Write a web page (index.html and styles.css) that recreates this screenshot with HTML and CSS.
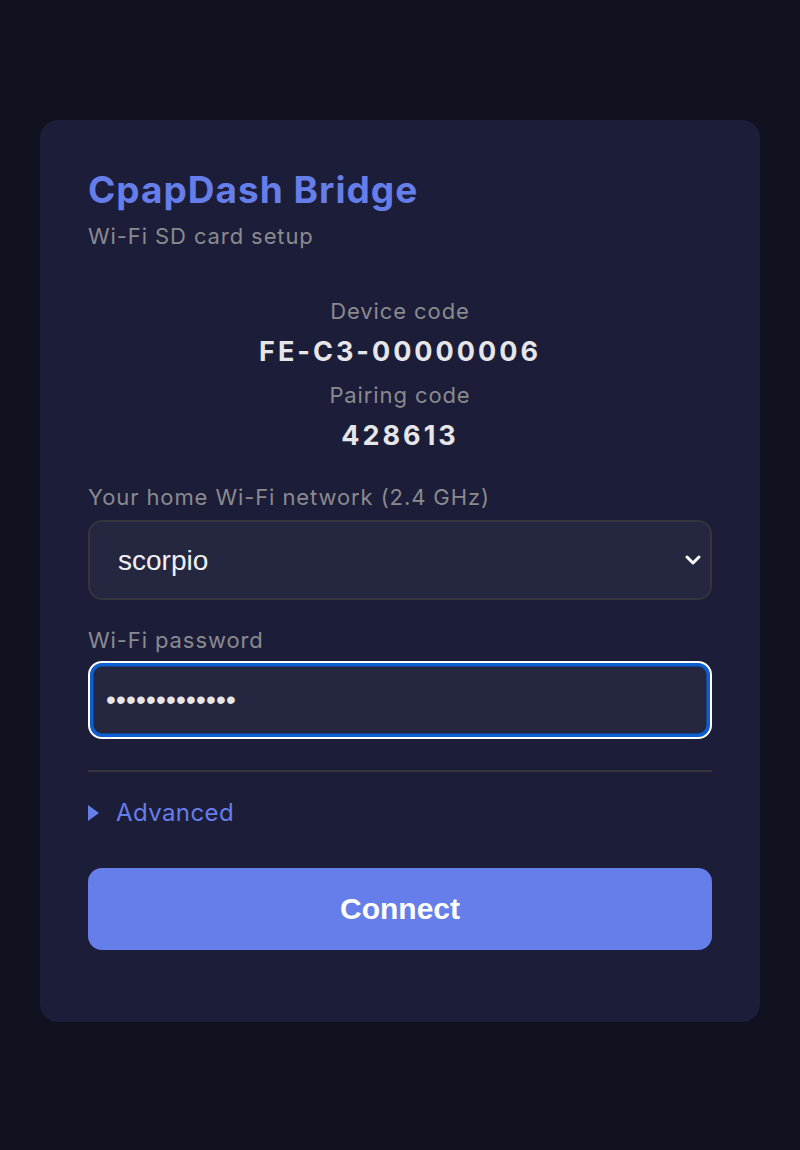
FILE: index.html
```html
<!DOCTYPE html>
<html lang="en">
<head>
<meta charset="utf-8">
<title>CpapDash Bridge</title>
<link rel="stylesheet" href="styles.css">
</head>
<body>
<main class="card">
  <h1 class="title">CpapDash Bridge</h1>
  <p class="subtitle">Wi-Fi SD card setup</p>

  <section class="codes">
    <div class="code-label">Device code</div>
    <div class="code-value">FE-C3-00000006</div>
    <div class="code-label code-label-2">Pairing code</div>
    <div class="code-value">428613</div>
  </section>

  <label class="field-label first" for="ssid">Your home Wi-Fi network (2.4 GHz)</label>
  <div class="select-wrap">
    <select id="ssid" class="select">
      <option>scorpio</option>
    </select>
    <svg class="chevron" width="18" height="12" viewBox="0 0 18 12" aria-hidden="true">
      <path d="M3 3 L9 9 L15 3" fill="none" stroke="#ffffff" stroke-width="3" stroke-linecap="round" stroke-linejoin="round"/>
    </svg>
  </div>

  <label class="field-label" for="pw">Wi-Fi password</label>
  <input id="pw" class="input focused" type="password" value="scorpio123456">

  <hr class="divider">

  <div class="advanced">
    <span class="tri"></span>
    <span>Advanced</span>
  </div>

  <button class="btn" type="button">Connect</button>
</main>
</body>
</html>
```

FILE: styles.css
```css
html, body {
  margin: 0;
  padding: 0;
}
body {
  background: #10121f;
  font-family: Inter, "Noto Sans", "Liberation Sans", sans-serif;
  padding: 120px 40px 0;
  min-height: 1150px;
  box-sizing: border-box;
}
.card {
  background: #1c1d38;
  border-radius: 18px;
  padding: 48px 48px 72px;
  display: flex;
  flex-direction: column;
}
.title {
  margin: 0;
  font-size: 37px;
  line-height: 44px;
  font-weight: 700;
  color: #667eea;
  letter-spacing: 1px;
}
.subtitle {
  margin: 8px 0 0;
  font-size: 22px;
  line-height: 32px;
  color: #8a8a8f;
  letter-spacing: 0.9px;
}
.codes {
  margin-top: 43px;
  display: flex;
  flex-direction: column;
  align-items: center;
}
.code-label {
  font-size: 22px;
  line-height: 32px;
  color: #8a8a8f;
  letter-spacing: 0.9px;
}
.code-label-2 {
  margin-top: 9px;
}
.code-value {
  margin-top: 7px;
  font-size: 27px;
  line-height: 36px;
  font-weight: 700;
  color: #e6e6e8;
  letter-spacing: 3px;
}
.field-label {
  display: block;
  margin-top: 24px;
  font-size: 22px;
  line-height: 32px;
  color: #8a8a8f;
  letter-spacing: 0.9px;
}
.field-label.first {
  margin-top: 27px;
}
.select-wrap {
  position: relative;
  margin-top: 7px;
}
.select {
  -webkit-appearance: none;
  appearance: none;
  width: 100%;
  height: 80px;
  box-sizing: border-box;
  background: #25263f;
  border: 2px solid #35353f;
  border-radius: 14px;
  color: #f0f0f2;
  font-family: "Liberation Sans", Arial, sans-serif;
  font-size: 28px;
  padding: 0 60px 0 28px;
  outline: none;
}
.chevron {
  position: absolute;
  right: 10px;
  top: 34px;
  pointer-events: none;
}
.input {
  margin-top: 5px;
  width: 100%;
  height: 78px;
  box-sizing: border-box;
  background: #25263f;
  border: 2px solid #35353f;
  border-radius: 14px;
  color: #e6e6e8;
  font-family: "Liberation Sans", Arial, sans-serif;
  font-size: 28px;
  padding: 0 16px;
  outline: none;
  letter-spacing: 0.2px;
}
.input.focused {
  border-color: #ffffff;
  box-shadow: inset 0 0 0 3.5px #0a60d2;
}
.divider {
  margin: 31px 0 0;
  border: 0;
  height: 2px;
  background: #34343c;
}
.advanced {
  margin-top: 25px;
  display: flex;
  align-items: center;
  gap: 17px;
  font-size: 24px;
  line-height: 32px;
  color: #667eea;
  letter-spacing: 0.4px;
}
.tri {
  width: 0;
  height: 0;
  border-top: 8px solid transparent;
  border-bottom: 8px solid transparent;
  border-left: 11px solid #667eea;
}
.btn {
  margin-top: 39px;
  height: 82px;
  border: 0;
  border-radius: 14px;
  background: #667eea;
  color: #ffffff;
  font-family: "Liberation Sans", Arial, sans-serif;
  font-weight: 700;
  font-size: 30px;
  cursor: pointer;
}
```
